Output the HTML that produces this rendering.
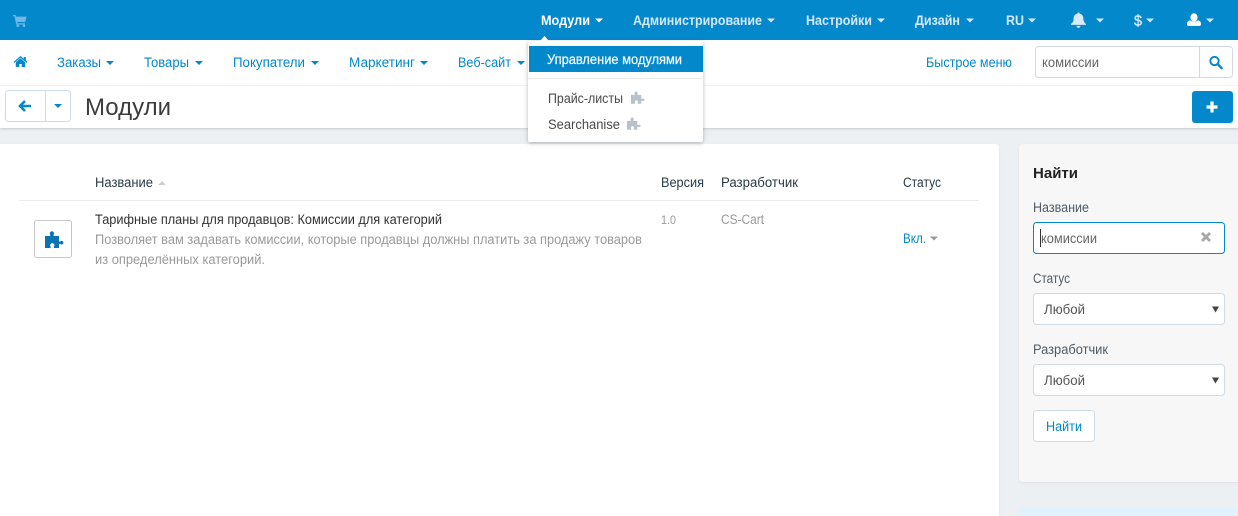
<!DOCTYPE html>
<html lang="ru">
<head>
<meta charset="utf-8">
<title>Модули</title>
<style>
html,body{margin:0;padding:0;background:#ecf0f3;width:1238px;height:516px;overflow:hidden}
svg{display:block}
text{font-family:"Liberation Sans","DejaVu Sans",sans-serif;font-size:13.4px}
.top{fill:#d3e8f5;font-weight:bold;font-size:13.4px}
.sub{fill:#0388cc}
.dark{fill:#333}
.head{fill:#2b3a45}
.gray{fill:#9a9a9a}
.lab{fill:#4f5b66}
</style>
</head>
<body>
<svg xmlns="http://www.w3.org/2000/svg" width="1238" height="516" viewBox="0 0 1238 516">
<defs>
<symbol id="puzzle" viewBox="0 0 19 17"><path d="M0 5h5.2V3.7a2.1 2.1 0 1 1 3.4 0V5H14v5.5h1.5a1.7 1.7 0 1 1 0 2.4H14V17H9v-1.5a2.1 2.1 0 1 0-3.4 0V17H0z"/></symbol>
<filter id="sh" x="-10%" y="-10%" width="120%" height="125%"><feDropShadow dx="0" dy="1" stdDeviation="2" flood-color="#000" flood-opacity=".28"/></filter>
<filter id="sh2" x="-2%" y="-10%" width="104%" height="130%"><feDropShadow dx="0" dy="1" stdDeviation="1.2" flood-color="#000" flood-opacity=".16"/></filter>
<filter id="sh3" x="-2%" y="-5%" width="104%" height="110%"><feDropShadow dx="0" dy="1" stdDeviation="1" flood-color="#000" flood-opacity=".07"/></filter>
</defs>

<rect width="1238" height="516" fill="#ecf0f3"/>

<!-- main panels -->
<path d="M0 144H995a4 4 0 0 1 4 4V516H0z" fill="#fff" filter="url(#sh3)"/>
<rect x="1019" y="144" width="230" height="338" rx="4" fill="#f7f7f7" filter="url(#sh3)"/>
<rect x="1019" y="507" width="230" height="20" rx="4" fill="#e1f2fd"/>

<!-- header bars -->
<rect x="0" y="40" width="1238" height="88" fill="#fff" filter="url(#sh2)"/>
<rect x="0" y="85" width="1238" height="1" fill="#f3f3f3"/>
<rect x="0" y="0" width="1238" height="40" fill="#0388cc"/>

<!-- top bar -->
<path d="M13 15h2.600l.4 1.600H26.500l-1.300 5.400H17l.3 1.200h7.700v1.300H16.200L14.500 16.300H13z" fill="#71b9e2"/>
<circle cx="17.800" cy="25.800" r="1.300" fill="#71b9e2"/><circle cx="24" cy="25.800" r="1.300" fill="#71b9e2"/>

<text x="541" y="25" class="top" style="fill:#fff" textLength="49" lengthAdjust="spacingAndGlyphs">Модули</text>
<path d="M595 18.500h8l-4 4z" fill="#fff"/>
<text x="633" y="25" class="top" textLength="129" lengthAdjust="spacingAndGlyphs">Администрирование</text>
<path d="M767 18.500h8l-4 4z" fill="#d3e8f5"/>
<text x="806" y="25" class="top" textLength="66" lengthAdjust="spacingAndGlyphs">Настройки</text>
<path d="M877 18.500h8l-4 4z" fill="#d3e8f5"/>
<text x="915" y="25" class="top" textLength="45" lengthAdjust="spacingAndGlyphs">Дизайн</text>
<path d="M966 18.500h8l-4 4z" fill="#d3e8f5"/>
<text x="1006" y="25" class="top" textLength="18" lengthAdjust="spacingAndGlyphs">RU</text>
<path d="M1028 18.500h8l-4 4z" fill="#d3e8f5"/>
<path d="M1078.500 12.500a1.200 1.200 0 0 1 1.200 1.200c2.800.5 3.700 2.700 3.700 5.300 0 2.300 1.100 3.700 2.600 5v.9h-15v-.9c1.500-1.300 2.600-2.700 2.600-5 0-2.600.9-4.800 3.700-5.300a1.200 1.200 0 0 1 1.200-1.200zM1076.600 25.900h3.800a1.900 1.900 0 0 1-3.800 0z" fill="#d8eaf6"/>
<path d="M1096 18.500h8l-4 4z" fill="#d3e8f5"/>
<text x="1134" y="25.500" class="top" style="font-size:15px;font-weight:normal;stroke:#d3e8f5;stroke-width:.4" textLength="8" lengthAdjust="spacingAndGlyphs">$</text>
<path d="M1146 18.500h8l-4 4z" fill="#d3e8f5"/>
<ellipse cx="1194" cy="17.500" rx="3.600" ry="4.300" fill="#fff"/>
<path d="M1187 24.300c0-2.400 1.200-3.700 3.200-3.900.9.800 2.300 1.300 3.800 1.300s2.900-.5 3.800-1.300c2 .2 3.200 1.500 3.200 3.900 0 1.100-.7 1.700-1.800 1.700h-10.400c-1.100 0-1.800-.6-1.800-1.700z" fill="#fff"/>
<path d="M1206 18.500h8l-4 4z" fill="#d3e8f5"/>

<!-- sub nav -->
<path d="M20.500 56l3.300 2.800V57h2v3.500l1.700 1.500-.8.900-6.200-5.300-6.200 5.300-.8-.9z" fill="#0388cc"/>
<path d="M15.800 62.300l4.700-4 4.700 4V67h-3.500v-3h-2.400v3h-3.500z" fill="#0388cc"/>
<text x="57" y="67" class="sub" textLength="44" lengthAdjust="spacingAndGlyphs">Заказы</text>
<path d="M106 61h8l-4 4z" fill="#0388cc"/>
<text x="144" y="67" class="sub" textLength="45" lengthAdjust="spacingAndGlyphs">Товары</text>
<path d="M195 61h8l-4 4z" fill="#0388cc"/>
<text x="233" y="67" class="sub" textLength="72" lengthAdjust="spacingAndGlyphs">Покупатели</text>
<path d="M311 61h8l-4 4z" fill="#0388cc"/>
<text x="349" y="67" class="sub" textLength="66" lengthAdjust="spacingAndGlyphs">Маркетинг</text>
<path d="M420 61h8l-4 4z" fill="#0388cc"/>
<text x="458" y="67" class="sub" textLength="53" lengthAdjust="spacingAndGlyphs">Веб-сайт</text>
<path d="M517 61h8l-4 4z" fill="#0388cc"/>
<text x="926" y="67" class="sub" textLength="86" lengthAdjust="spacingAndGlyphs">Быстрое меню</text>

<rect x="1035.500" y="46.500" width="197" height="31" rx="3" fill="#fff" stroke="#d0dae3"/>
<path d="M1199.500 47v30" stroke="#d0dae3"/>
<text x="1042" y="67" fill="#666" textLength="57" lengthAdjust="spacingAndGlyphs">комиссии</text>
<circle cx="1214.500" cy="61" r="4.200" fill="none" stroke="#0388cc" stroke-width="1.900"/>
<path d="M1217.700 64.200l4 4" stroke="#0388cc" stroke-width="2.300" stroke-linecap="round"/>

<!-- title row -->
<rect x="5.500" y="90.500" width="65" height="31" rx="3" fill="#fff" stroke="#d0dae3"/>
<path d="M45.500 91v30" stroke="#d0dae3"/>
<path d="M25 101l-5 5 5 5M20.500 106H31" fill="none" stroke="#0388cc" stroke-width="2.600"/>
<path d="M54 104h8l-4 4z" fill="#0388cc"/>
<text x="85" y="115" fill="#3c3c3c" style="font-size:24px" textLength="86" lengthAdjust="spacingAndGlyphs">Модули</text>
<rect x="1192" y="91" width="41" height="32" rx="3" fill="#0388cc"/>
<path d="M1212 101.500v11M1206.500 107h11" stroke="#fff" stroke-width="3.200"/>

<!-- table -->
<text x="95" y="187" class="head" textLength="58" lengthAdjust="spacingAndGlyphs">Название</text>
<path d="M158 185l4-4 4 4z" fill="#cfcfcf"/>
<text x="661" y="187" class="head" textLength="43" lengthAdjust="spacingAndGlyphs">Версия</text>
<text x="721" y="187" class="head" textLength="77" lengthAdjust="spacingAndGlyphs">Разработчик</text>
<text x="903" y="187" class="head" textLength="38" lengthAdjust="spacingAndGlyphs">Статус</text>
<rect x="19" y="200" width="960" height="1" fill="#ebebeb"/>

<rect x="34.500" y="220.500" width="37" height="37" rx="2" fill="#fff" stroke="#c9c9c9"/>
<use href="#puzzle" x="45" y="231" width="19" height="17" fill="#0a74b0"/>

<text x="95" y="224" fill="#333" textLength="347" lengthAdjust="spacingAndGlyphs">Тарифные планы для продавцов: Комиссии для категорий</text>
<text x="95" y="244" class="gray" textLength="547" lengthAdjust="spacingAndGlyphs">Позволяет вам задавать комиссии, которые продавцы должны платить за продажу товаров</text>
<text x="95" y="264" class="gray" textLength="170" lengthAdjust="spacingAndGlyphs">из определённых категорий.</text>
<text x="661" y="224" class="gray" style="font-size:12px" textLength="15" lengthAdjust="spacingAndGlyphs">1.0</text>
<text x="721" y="224" class="gray" textLength="43" lengthAdjust="spacingAndGlyphs">CS-Cart</text>
<text x="903" y="243" class="sub" textLength="23" lengthAdjust="spacingAndGlyphs">Вкл.</text>
<path d="M930 236.500h8l-4 4z" fill="#999"/>

<!-- sidebar -->
<text x="1033" y="178" fill="#222" style="font-size:15px;font-weight:bold" textLength="45" lengthAdjust="spacingAndGlyphs">Найти</text>
<text x="1033" y="212" class="lab" textLength="56" lengthAdjust="spacingAndGlyphs">Название</text>
<rect x="1033.500" y="222.500" width="191" height="31" rx="3" fill="#fff" stroke="#0388cc"/>
<rect x="1040" y="229" width="1" height="18" fill="#333"/>
<text x="1041" y="243" fill="#666" textLength="56" lengthAdjust="spacingAndGlyphs">комиссии</text>
<path d="M1202 233l8 8M1210 233l-8 8" stroke="#a8a8a8" stroke-width="2.900"/>

<text x="1033" y="283" class="lab" textLength="37" lengthAdjust="spacingAndGlyphs">Статус</text>
<rect x="1033.500" y="293.500" width="191" height="31" rx="3" fill="#fff" stroke="#d0dae3"/>
<text x="1044" y="314" fill="#555" textLength="41" lengthAdjust="spacingAndGlyphs">Любой</text>
<path d="M1212 306.500h7l-3.500 6z" fill="#444"/>

<text x="1033" y="354" class="lab" textLength="75" lengthAdjust="spacingAndGlyphs">Разработчик</text>
<rect x="1033.500" y="364.500" width="191" height="31" rx="3" fill="#fff" stroke="#d0dae3"/>
<text x="1044" y="385" fill="#555" textLength="41" lengthAdjust="spacingAndGlyphs">Любой</text>
<path d="M1212 377.500h7l-3.500 6z" fill="#444"/>

<rect x="1033.500" y="410.500" width="61" height="31" rx="3" fill="#fff" stroke="#d0dae3"/>
<text x="1046" y="431" class="sub" textLength="36" lengthAdjust="spacingAndGlyphs">Найти</text>

<!-- dropdown -->
<rect x="528" y="41" width="175" height="101" rx="2" fill="#fff" filter="url(#sh)"/>
<path d="M540 41l4.500-5 4.500 5z" fill="#fff"/>
<rect x="529" y="46" width="174" height="26" fill="#0388cc"/>
<text x="547" y="64" fill="#f2f9fd" style="stroke:#f2f9fd;stroke-width:.25" textLength="135" lengthAdjust="spacingAndGlyphs">Управление модулями</text>
<rect x="529" y="78" width="173" height="1" fill="#e9e9e9"/>
<text x="548" y="103" fill="#4a4a4a" textLength="75" lengthAdjust="spacingAndGlyphs">Прайс-листы</text>
<use href="#puzzle" x="631" y="91" width="14" height="13" fill="#b6c2cc"/>
<text x="548" y="129" fill="#4a4a4a" textLength="72" lengthAdjust="spacingAndGlyphs">Searchanise</text>
<use href="#puzzle" x="627" y="117" width="14" height="13" fill="#b6c2cc"/>
</svg>
</body>
</html>
